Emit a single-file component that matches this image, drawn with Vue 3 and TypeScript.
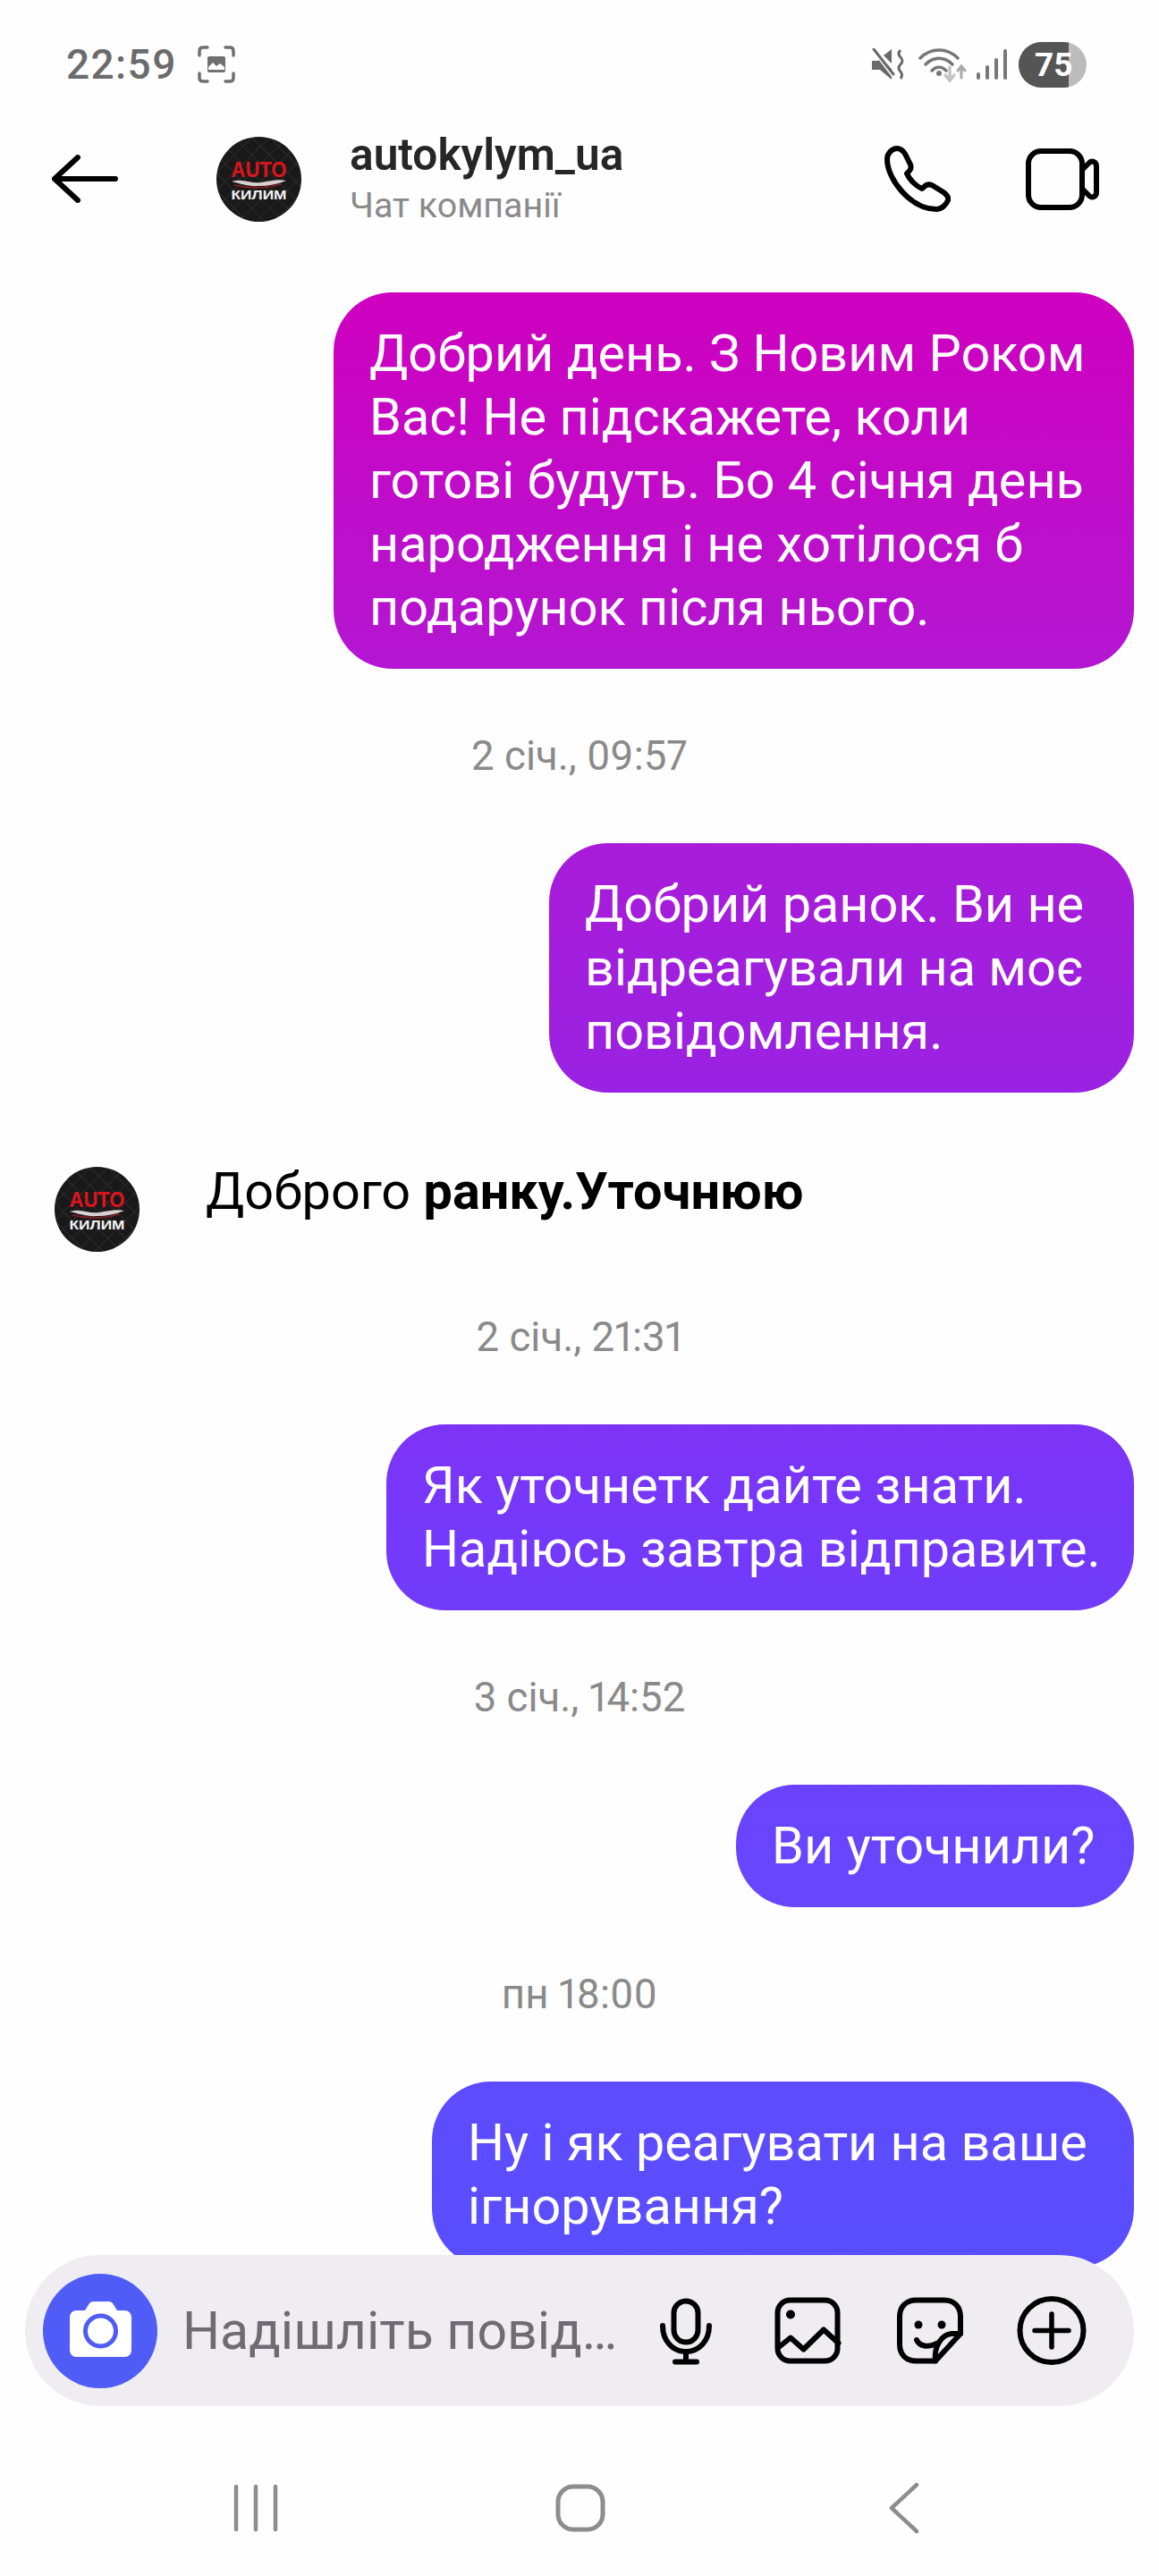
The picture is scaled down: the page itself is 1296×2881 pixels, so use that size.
<script setup lang="ts">
type Item =
  | { id: number; kind: 'out'; width: number; lines: string[] }
  | { id: number; kind: 'time'; text: string }
  | { id: number; kind: 'in'; plain: string; bold: string }

const thread: Item[] = [
  {
    id: 1,
    kind: 'out',
    width: 895,
    lines: [
      'Добрий день. З Новим Роком',
      'Вас! Не підскажете, коли',
      'готові будуть. Бо 4 січня день',
      'народження і не хотілося б',
      'подарунок після нього.'
    ]
  },
  { id: 2, kind: 'time', text: '2 січ., 09:57' },
  { id: 3, kind: 'out', width: 654, lines: ['Добрий ранок. Ви не', 'відреагували на моє', 'повідомлення.'] },
  { id: 4, kind: 'in', plain: 'Доброго ', bold: 'ранку.Уточнюю' },
  { id: 5, kind: 'time', text: '2 січ., 21:31' },
  { id: 6, kind: 'out', width: 836, lines: ['Як уточнетк дайте знати.', 'Надіюсь завтра відправите.'] },
  { id: 7, kind: 'time', text: '3 січ., 14:52' },
  { id: 8, kind: 'out', width: 445, lines: ['Ви уточнили?'] },
  { id: 9, kind: 'time', text: 'пн 18:00' },
  { id: 10, kind: 'out', width: 785, lines: ['Ну і як реагувати на ваше', 'ігнорування?'] }
]
</script>

<template>
  <div class="page">
    <div class="status">
      <div class="status-left">
        <span class="clock">22:59</span>
        <svg class="shot" width="42" height="42" viewBox="0 0 42 42" fill="none" stroke="#707070" stroke-width="3.5" stroke-linecap="round">
          <path d="M2 11V6Q2 2 6 2H11M31 2H36Q40 2 40 6V11M40 31V36Q40 40 36 40H31M11 40H6Q2 40 2 36V31" />
          <path d="M11 14Q11 12 13 12H29Q31 12 31 14V28Q31 30 29 30H13Q11 30 11 28Z" fill="#707070" stroke="none" />
          <path d="M12 24L17 19L21 23L25 20L30 24V27H12Z" fill="#fff" stroke="none" />
        </svg>
      </div>
      <div class="status-right">
        <svg width="38" height="36" viewBox="0 0 38 36" fill="none">
          <path d="M1 14H8L11 11L23 23V35L10 24H1Z" fill="#6a6a6a" />
          <path d="M14 8L23 1V17Z" fill="#6a6a6a" />
          <path d="M3 3L26 33" stroke="#fff" stroke-width="3" />
          <path d="M3 1L25 29" stroke="#6a6a6a" stroke-width="3" stroke-linecap="round" />
          <path d="M33 2Q29 6 33 10Q37 14 33 18Q29 22 33 26Q36 30 33 34" stroke="#6a6a6a" stroke-width="3" />
        </svg>
        <svg class="wifi" width="56" height="42" viewBox="0 0 56 42" fill="none" stroke-linecap="round">
          <path d="M2 14C14 2 32 2 44 14" stroke="#777" stroke-width="3.5" />
          <path d="M8 21C17 12 29 12 38 21" stroke="#777" stroke-width="3.5" />
          <path d="M15 28C20 23 26 23 31 28" stroke="#777" stroke-width="3.5" />
          <circle cx="23" cy="31" r="3" fill="#777" />
          <path d="M35 24V38M30 33L35 39L40 33" stroke="#c4c4c4" stroke-width="3.5" />
          <path d="M48 36V24M44 28L48 23L52 28" stroke="#aaa" stroke-width="3" />
        </svg>
        <svg class="bars" width="34" height="36" viewBox="0 0 34 36" fill="#777">
          <rect x="0" y="27" width="4" height="8" rx="2" />
          <rect x="10" y="19" width="4" height="16" rx="2" />
          <rect x="20" y="11" width="4" height="24" rx="2" />
          <rect x="30" y="1" width="4" height="34" rx="2" />
        </svg>
        <div class="battery"><span class="battery-level">75</span></div>
      </div>
    </div>

    <header class="bar">
      <svg class="back" width="74" height="54" viewBox="0 0 74 54" fill="none" stroke="#000" stroke-width="6" stroke-linecap="round" stroke-linejoin="round">
        <path d="M71 27H3M29 3L3 27L29 51" />
      </svg>
      <svg class="avatar" width="95" height="95" viewBox="0 0 95 95">
        <defs>
          <pattern id="quilt" width="14" height="14" patternUnits="userSpaceOnUse" patternTransform="rotate(45)">
            <rect width="14" height="14" fill="#1a191a" />
            <path d="M0 0H14M0 0V14" stroke="#333233" stroke-width="1.3" />
          </pattern>
        </defs>
        <circle cx="47.5" cy="47.5" r="47.5" fill="url(#quilt)" />
        <text x="47.5" y="45" text-anchor="middle" class="logo-red" textLength="62" lengthAdjust="spacingAndGlyphs">AUTO</text>
        <path d="M17 50C30 46 38 53 50 51C60 49 70 47 78 49C68 53 58 55 48 55C36 56 26 52 17 50Z" fill="#d9d0d0" />
        <path d="M20 54C32 57 50 59 72 53" stroke="#8c1c24" stroke-width="1.6" fill="none" />
        <text x="47.5" y="70" text-anchor="middle" class="logo-white" textLength="62" lengthAdjust="spacingAndGlyphs">КИЛИМ</text>
      </svg>
      <div class="who">
        <div class="name">autokylym_ua</div>
        <div class="sub">Чат компанії</div>
      </div>
      <svg class="phone" width="74" height="74" viewBox="0 0 74 74" fill="none" stroke="#000" stroke-width="6" stroke-linejoin="round">
        <path d="M14 3C18 3 21 6 23 9L29 21C30 24 30 26 28 28L25 31C28 38 35 45 42 48L46 44.5C48 43 50 43 53 44L66 52C70 55 72 58 71 61C69 66 64 71 58 71C30 71 3 38 3 15C3 9 8 3 14 3Z" />
      </svg>
      <svg class="video" width="82" height="69" viewBox="0 0 82 69" fill="none" stroke="#000" stroke-width="6" stroke-linejoin="round">
        <rect x="3" y="3" width="60" height="63" rx="14" />
        <path d="M63 24L71 16C74 13 79 15 79 20V49C79 54 74 56 71 53L63 45" />
      </svg>
    </header>

    <main class="thread">
      <template v-for="item in thread" :key="item.id">
        <div v-if="item.kind === 'out'" class="out" :style="{ width: item.width + 'px' }">
          <span v-for="line in item.lines" :key="line" class="line">{{ line }}</span>
        </div>
        <div v-else-if="item.kind === 'time'" class="when">{{ item.text }}</div>
        <div v-else class="in">
          <svg class="avatar" width="95" height="95" viewBox="0 0 95 95">
            <circle cx="47.5" cy="47.5" r="47.5" fill="url(#quilt)" />
            <text x="47.5" y="45" text-anchor="middle" class="logo-red" textLength="62" lengthAdjust="spacingAndGlyphs">AUTO</text>
            <path d="M17 50C30 46 38 53 50 51C60 49 70 47 78 49C68 53 58 55 48 55C36 56 26 52 17 50Z" fill="#d9d0d0" />
            <path d="M20 54C32 57 50 59 72 53" stroke="#8c1c24" stroke-width="1.6" fill="none" />
            <text x="47.5" y="70" text-anchor="middle" class="logo-white" textLength="62" lengthAdjust="spacingAndGlyphs">КИЛИМ</text>
          </svg>
          <p class="reply">{{ item.plain }}<b>{{ item.bold }}</b></p>
        </div>
      </template>
    </main>

    <div class="composer">
      <div class="cam">
        <svg width="128" height="128" viewBox="0 0 128 128">
          <path d="M38 41H47L52 33C53 31.5 55 31 57 31H73C75 31 77 31.5 78 33L83 41H91C96 41 99 44 99 49V85C99 90 96 93 91 93H38C33 93 30 90 30 85V49C30 44 33 41 38 41Z" fill="#fff" />
          <circle cx="64.5" cy="64" r="17" fill="#fff" stroke="#4f5cf5" stroke-width="5" />
        </svg>
      </div>
      <span class="hint">Надішліть повід…</span>
      <div class="tools">
        <svg width="80" height="85" viewBox="0 0 80 85" fill="none" stroke="#000" stroke-width="6" stroke-linecap="round" stroke-linejoin="round">
          <rect x="26.5" y="9.5" width="27" height="46" rx="13.5" />
          <path d="M14 37C14 55 26 66 40 66C54 66 66 55 66 37M40 66V76M28 77.5H52" />
        </svg>
        <svg width="80" height="85" viewBox="0 0 80 85" fill="none" stroke="#000" stroke-width="6" stroke-linecap="round" stroke-linejoin="round">
          <rect x="6.5" y="8.5" width="67" height="68" rx="14" />
          <circle cx="21" cy="24.5" r="5" fill="#000" stroke="none" />
          <path d="M8.5 60.5L21 50.5L35.5 63.5L58 41.5L74.5 56.5" />
        </svg>
        <svg width="80" height="85" viewBox="0 0 80 85" fill="none" stroke="#000" stroke-width="6" stroke-linecap="round" stroke-linejoin="round">
          <path d="M46 76.5H24C13 76.5 6 69 6 58V27C6 16 13 8.5 24 8.5H56C67 8.5 74 16 74 27V46L46 76.5Z" />
          <path d="M74 46H64C53 47 44 60 46 76.5" />
          <circle cx="27" cy="36" r="4.5" fill="#000" stroke="none" />
          <circle cx="53" cy="36" r="4.5" fill="#000" stroke="none" />
          <path d="M25 53C28 60 38 62 47 57" />
        </svg>
        <svg width="80" height="85" viewBox="0 0 80 85" fill="none" stroke="#000" stroke-width="6" stroke-linecap="round">
          <circle cx="40" cy="42.5" r="35.5" />
          <path d="M21 42.5H59M40 24V61" stroke-width="5.5" />
        </svg>
      </div>
    </div>

    <nav class="nav">
      <svg width="100" height="60" viewBox="0 0 100 60" fill="none" stroke="#8d8d8d" stroke-width="4.5" stroke-linecap="round">
        <path d="M28 6V54M50 6V54M72 6V54" />
      </svg>
      <svg width="100" height="60" viewBox="0 0 100 60" fill="none" stroke="#8d8d8d" stroke-width="5">
        <rect x="25" y="6" width="50" height="48" rx="17" />
      </svg>
      <svg width="100" height="60" viewBox="0 0 100 60" fill="none" stroke="#8d8d8d" stroke-width="4.5" stroke-linecap="round" stroke-linejoin="round">
        <path d="M63 4L35 30L63 56" />
      </svg>
    </nav>
  </div>
</template>

<style scoped>
.page {
  position: relative;
  width: 1296px;
  height: 2881px;
  overflow: hidden;
  display: flex;
  flex-direction: column;
  background: #fffeff;
  font-family: Roboto, "Liberation Sans", sans-serif;
}

.status {
  flex: none;
  height: 144px;
  display: flex;
  align-items: center;
  justify-content: space-between;
  padding: 0 81px 0 74px;
}
.status-left {
  display: flex;
  align-items: center;
  gap: 23px;
}
.clock {
  font-size: 46px;
  font-weight: 500;
  letter-spacing: 1.4px;
  color: #6b6b6b;
}
.status-right {
  display: flex;
  align-items: center;
}
.wifi { margin-left: 15px; }
.bars { margin-left: 9px; }
.battery {
  margin-left: 13px;
  width: 76px;
  height: 51px;
  border-radius: 26px;
  overflow: hidden;
  background: #bcbcbc;
  position: relative;
}
.battery-level {
  display: flex;
  align-items: center;
  width: 56px;
  height: 51px;
  padding-left: 18px;
  box-sizing: border-box;
  background: #555;
  color: #fff;
  font-size: 37px;
  font-weight: 700;
  overflow: visible;
  white-space: nowrap;
}

.bar {
  flex: none;
  height: 112px;
  display: flex;
  align-items: center;
  padding: 0 67px 0 58px;
}
.avatar { flex: none; }
.bar .avatar { margin-left: 110px; }
.who {
  flex: 1;
  margin-left: 54px;
}
.name {
  font-size: 49.6px;
  line-height: 53px;
  font-weight: 600;
  color: #262626;
}
.sub {
  margin-top: 6px;
  font-size: 39.4px;
  line-height: 48px;
  color: #8a8a8a;
}
.video { margin-left: 84px; }

.logo-red {
  font-family: "Liberation Sans", sans-serif;
  font-size: 24px;
  font-weight: 700;
  fill: #e0141c;
}
.logo-white {
  font-family: "Liberation Sans", sans-serif;
  font-size: 15px;
  font-weight: 700;
  fill: #f2f2f2;
}

.thread {
  flex: 1;
  min-height: 0;
  overflow: hidden;
  display: flex;
  flex-direction: column;
  align-items: flex-end;
  padding: 71px 28px 0 61px;
}
.out {
  flex: none;
  box-sizing: border-box;
  padding: 33px 40px;
  border-radius: 66px;
  color: #fff;
  font-size: 57.6px;
  line-height: 71px;
  background-image: linear-gradient(
    to bottom,
    #d100bd 0,
    #cf00bf 327px,
    #b317d2 748px,
    #9a22e2 1220px,
    #7538fb 1700px,
    #6647ff 2130px,
    #584fff 2530px,
    #584fff 100%
  );
  background-attachment: fixed;
}
.line {
  display: block;
  white-space: nowrap;
}
.when {
  flex: none;
  align-self: center;
  margin: 76px 33px 75px 0;
  font-size: 45.6px;
  line-height: 44px;
  font-variant-numeric: proportional-nums;
  color: #8a8a8a;
}
.in {
  flex: none;
  align-self: flex-start;
  display: flex;
  align-items: flex-start;
  height: 93px;
  margin-top: 83px;
}
.reply {
  margin: -8px 0 0 74px;
  font-size: 57.6px;
  line-height: 71px;
  color: #000;
}
.reply b { font-weight: 700; }

.composer {
  position: absolute;
  left: 28px;
  right: 28px;
  bottom: 190px;
  height: 169px;
  border-radius: 84px;
  background: #efedf2;
  display: flex;
  align-items: center;
  padding: 0 52px 0 20px;
  box-sizing: border-box;
}
.cam {
  flex: none;
  width: 128px;
  height: 128px;
  border-radius: 50%;
  background: #4f5cf5;
}
.cam svg { display: block; }
.hint {
  flex: 1;
  margin-left: 28px;
  font-size: 59px;
  color: #6e6c72;
  white-space: nowrap;
}
.tools {
  display: flex;
  gap: 56.5px;
}

.nav {
  flex: none;
  height: 152px;
  display: flex;
  align-items: center;
  justify-content: center;
  gap: 263px;
  padding-left: 2px;
}
</style>

<style>
html, body { background: #fffeff; }
</style>
